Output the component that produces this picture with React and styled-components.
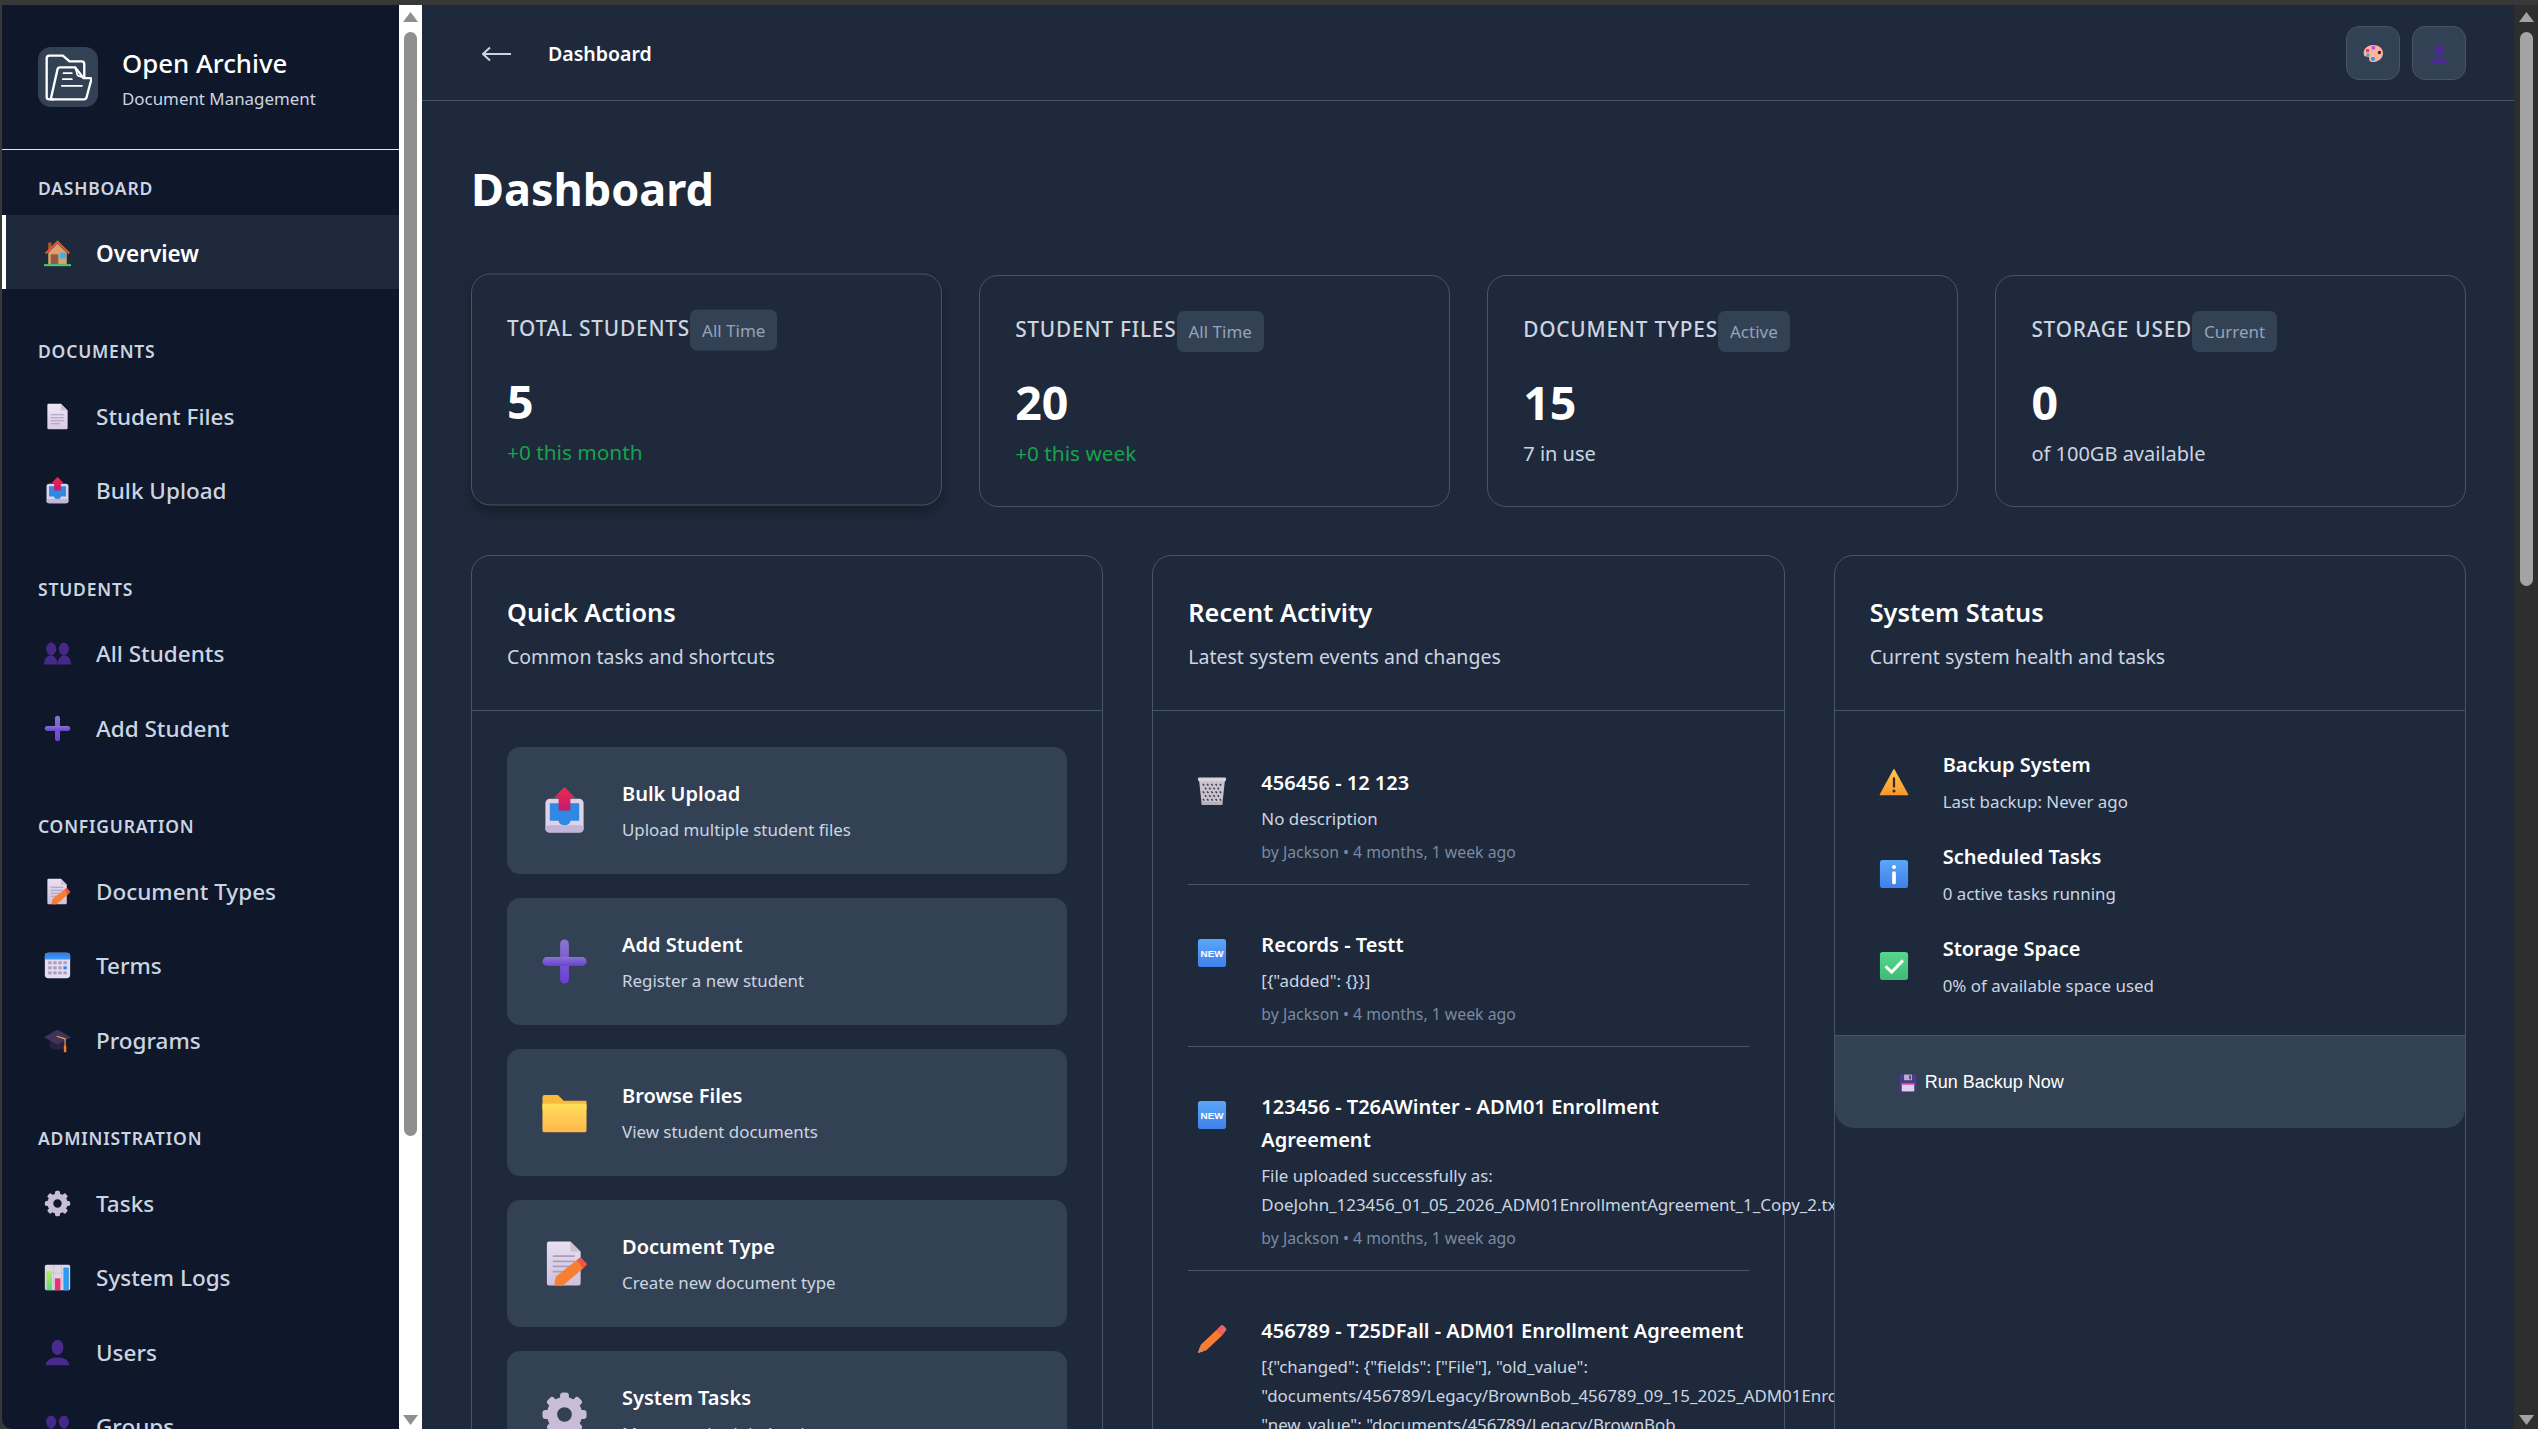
import React from "react";
import styled, { createGlobalStyle } from "styled-components";

const FONT = `"Noto Sans", "Open Sans", sans-serif`;

const Global = createGlobalStyle`
  html, body { margin: 0; padding: 0; background: #333; height: 100%; overflow: hidden; }
  body { font-family: ${FONT}; }
  * { box-sizing: border-box; }
`;

/* ---------- icons, drawn by hand in a 32 box ---------- */
const Svg = ({ size = 27, children }) => (
  <svg width={size} height={size} viewBox="0 0 32 32" style={{ display: "block", flex: "none" }}>{children}</svg>
);
const Grad = ({ id, a, b, x2 = 0, y2 = 1 }) => (
  <linearGradient id={id} x1="0" y1="0" x2={x2} y2={y2}><stop offset="0" stopColor={a} /><stop offset="1" stopColor={b} /></linearGradient>
);
const House = (p) => (
  <Svg {...p}>
    <rect x="5" y="3" width="4" height="10" fill="#b4552f" />
    <path d="M5 15 16 4l11 11v14H5z" fill="#dca06a" />
    <path d="M2 16 16 2l14 14" fill="none" stroke="#e5532d" strokeWidth="2.6" />
    <rect x="8" y="17" width="9" height="12" rx="1" fill="#8f5c4a" />
    <rect x="19" y="15" width="7" height="7" fill="#38b2f2" />
    <rect x="0" y="28.6" width="32" height="2.4" fill="#3fd072" />
  </Svg>
);
const Doc = (p) => (
  <Svg {...p}>
    <defs><Grad id="docg" a="#efe7f6" b="#d8cbe6" /></defs>
    <path d="M4 2.5A1.5 1.5 0 0 1 5.500 1H20l8 8v20.500a1.500 1.500 0 0 1-1.500 1.500h-21A1.500 1.500 0 0 1 4 29.500z" fill="url(#docg)" />
    <path d="M20 1v8h8z" fill="#cbc2d6" />
    <path d="M8 14h16M8 17.500h16M8 21h16M8 24.500h11" stroke="#a99fb8" strokeWidth="1.200" />
  </Svg>
);
const Upload = (p) => (
  <Svg {...p}>
    <defs><Grad id="upg" a="#ee2a4c" b="#c51a70" /></defs>
    <rect x="3" y="8" width="26" height="23" rx="3" fill="#ddd2e8" />
    <rect x="3" y="26" width="26" height="5" rx="2.500" fill="#c3b4da" />
    <path d="M6 11h20v12h-6a4 3 0 0 1-8 0H6z" fill="#2f88e2" />
    <path d="M16 0l7.500 7.500H20V16h-8V7.500H8.500z" fill="url(#upg)" />
  </Svg>
);
const bust = (x, w) => `M${x - w} 29c0-7 ${w - 4} -11 ${w} -11s${w} 4 ${w} 11z`;
const Users = (p) => (
  <Svg {...p}>
    <g fill="#46288a">
      <ellipse cx="8.500" cy="10.500" rx="6" ry="7.500" />
      <path d={bust(8, 8)} />
      <ellipse cx="23.500" cy="10.500" rx="6" ry="7.500" />
      <path d={bust(24, 8)} />
    </g>
  </Svg>
);
const Plus = (p) => (
  <Svg {...p}>
    <defs><Grad id="plg" a="#8a75cf" b="#6a3fd3" /></defs>
    <rect x="13" y="1" width="6" height="30" rx="3" fill="url(#plg)" />
    <rect x="1" y="13" width="30" height="6" rx="3" fill="url(#plg)" />
  </Svg>
);
const DocEdit = (p) => (
  <Svg {...p}>
    <defs><Grad id="degg" a="#e9e0f1" b="#cfc0de" /></defs>
    <path d="M4 2.500A1.500 1.500 0 0 1 5.500 1H20l7 7v21.500a1.500 1.500 0 0 1-1.500 1.500h-20A1.500 1.500 0 0 1 4 29.500z" fill="url(#degg)" />
    <path d="M20 1v7h7z" fill="#cbc2d6" />
    <path d="M8 11h15M8 14.500h15M8 18h12M8 21.500h8" stroke="#a99fb8" strokeWidth="1.200" />
    <path d="M9 31l1-6 14-11 5 5-14 12z" fill="#f67f33" />
    <path d="M24 14l3-2.500 4.500 5L29 19z" fill="#f1543f" />
  </Svg>
);
const Calendar = (p) => (
  <Svg {...p}>
    <defs><Grad id="calg" a="#2a7de8" b="#3f9bf5" /></defs>
    <rect x="1" y="1" width="30" height="30" rx="4" fill="#e4dcf0" />
    <path d="M1 9V5a4 4 0 0 1 4-4h22a4 4 0 0 1 4 4v4z" fill="url(#calg)" />
    <g fill="#a99dc2">
      {[7, 13, 19, 25].map((x) => [12, 18, 24].map((y) => (x === 25 && y === 18 ? null : <rect key={x + "-" + y} x={x - 2} y={y - 1} width="4" height="3.500" />)))}
    </g>
    <rect x="23" y="17" width="4" height="3.500" fill="#2f86e8" />
  </Svg>
);
const Cap = (p) => (
  <Svg {...p}>
    <path d="M7 16v8c4 4 14 4 18 0v-8z" fill="#2b2040" />
    <path d="M16 3l16 9-16 9L0 12z" fill="#40325a" />
    <path d="M15 11l10 3v9" fill="none" stroke="#eaa63e" strokeWidth="1.400" />
    <rect x="23.500" y="22" width="3" height="8" rx="1" fill="#ee7d2f" />
  </Svg>
);
const Gear = ({ color = "#c8bdd8", ...p }) => (
  <Svg {...p}>
    <g fill={color}>
      {[0, 45, 90, 135, 180, 225, 270, 315].map((a) => (
        <rect key={a} x="13" y="1" width="6" height="7" rx="2" transform={`rotate(${a} 16 16)`} />
      ))}
    </g>
    <circle cx="16" cy="16" r="8.500" fill="none" stroke={color} strokeWidth="7" />
  </Svg>
);
const Chart = (p) => (
  <Svg {...p}>
    <defs><Grad id="chg" a="#b8ee52" b="#5cd983" /></defs>
    <rect x="1" y="1" width="30" height="30" rx="2" fill="#ddd6e6" />
    <path d="M11.500 1v30M21 1v30M1 11h30M1 21h30" stroke="#c4bcd0" strokeWidth=".8" />
    <rect x="3" y="8" width="6.500" height="23" fill="url(#chg)" />
    <rect x="13" y="17" width="6.500" height="14" fill="#ee2f72" />
    <rect x="23" y="4" width="6.500" height="27" rx="1" fill="#2d9bf0" />
  </Svg>
);
const User = (p) => (
  <Svg {...p}>
    <g fill="#4a2a8e">
      <ellipse cx="16" cy="10" rx="7" ry="9" />
      <path d="M2 31c1-7 8-9 14-9s13 2 14 9z" />
    </g>
  </Svg>
);
const Folder = (p) => (
  <Svg {...p}>
    <defs><Grad id="fog" a="#ffdf5a" b="#ffb74a" /></defs>
    <path d="M1 5.500A1.500 1.500 0 0 1 2.500 4h9l4 4H31v6H1z" fill="#f8b93c" />
    <path d="M1 10h29a1 1 0 0 1 1 1v17a1.500 1.500 0 0 1-1.500 1.500h-27A1.500 1.500 0 0 1 1 28z" fill="url(#fog)" />
  </Svg>
);
const Trash = (p) => (
  <Svg {...p}>
    <path d="M2 3h28l-3 27a1 1 0 0 1-1 1H6a1 1 0 0 1-1-1z" fill="#c8c3cf" />
    <g fill="#3b3b4a">
      {[8, 12, 16, 20, 24].map((y, r) =>
        [7, 11.500, 16, 20.500, 25].map((x, i) => (r % 2 && i === 4 ? null : (
          <path key={x + "-" + y} d={`M${x + (r % 2 ? 2.200 : 0)} ${y}l1.300 1.900L${x + (r % 2 ? 2.200 : 0)} ${y + 2.600}l-1.300-1.900z`} />
        )))
      )}
    </g>
    <rect x="1" y="1.500" width="30" height="4" rx="1.500" fill="#d7d3dd" />
    <rect x="5" y="27.500" width="22" height="3.500" rx="1" fill="#b5b0bc" />
  </Svg>
);
const New = (p) => (
  <Svg {...p}>
    <defs><Grad id="neg" a="#5aa7f8" b="#3f80ea" /></defs>
    <rect x="1" y="1" width="30" height="30" rx="3" fill="url(#neg)" />
    <text x="16" y="20" textAnchor="middle" fontFamily="'Liberation Sans', sans-serif" fontWeight="700" fontSize="10.500" fill="#fff">NEW</text>
  </Svg>
);
const Pencil = (p) => (
  <Svg {...p}>
    <path d="M1 31l3-9L21 6l6 6-17 16z" fill="#f87c33" />
    <path d="M21 6l4-4a2.500 2.500 0 0 1 3.500 0l2 2a2.500 2.500 0 0 1 0 3.500L27 12z" fill="#f0616a" />
    <path d="M1 31l2-6 3.800 4z" fill="#c9907a" />
  </Svg>
);
const Warning = (p) => (
  <Svg {...p}>
    <defs><Grad id="wag" a="#ffc551" b="#f8982c" /></defs>
    <path d="M16 3l14.500 26.500h-29z" fill="url(#wag)" stroke="url(#wag)" strokeWidth="1.500" strokeLinejoin="round" />
    <rect x="14.800" y="11" width="2.400" height="11" rx="1.200" fill="#3a2a1c" />
    <circle cx="16" cy="25.500" r="1.600" fill="#3a2a1c" />
  </Svg>
);
const Info = (p) => (
  <Svg {...p}>
    <defs><Grad id="ing" a="#5aa7f8" b="#3f80ea" /></defs>
    <rect x="1" y="1" width="30" height="30" rx="3" fill="url(#ing)" />
    <circle cx="16" cy="8.500" r="2.200" fill="#fff" />
    <rect x="14" y="13" width="4" height="14" rx="2" fill="#fff" />
  </Svg>
);
const Check = (p) => (
  <Svg {...p}>
    <defs><Grad id="ckg" a="#57d78c" b="#3dbb76" /></defs>
    <rect x="1" y="1" width="30" height="30" rx="3" fill="url(#ckg)" />
    <path d="M7 16.500l6.500 6L25.500 10" fill="none" stroke="#fff" strokeWidth="3.200" />
  </Svg>
);
const Floppy = (p) => (
  <Svg {...p}>
    <rect x="1" y="1" width="30" height="30" rx="2" fill="#4d3a88" />
    <rect x="9" y="1" width="14" height="10" fill="#b9aecc" />
    <rect x="18" y="2.500" width="3" height="7" fill="#4d3a88" />
    <rect x="5" y="16" width="22" height="15" fill="#dccff0" />
    <rect x="5" y="16" width="22" height="3" fill="#e83f7a" />
  </Svg>
);
const Palette = (p) => (
  <Svg {...p}>
    <path d="M15 3C7 3 1 8.500 1 15.500c0 4 2 5 4.500 5 3 0 4.500 1 4 4-.5 3 1.500 4.500 5 4.500 9 0 16-6 16-13.500S24 3 15 3z" fill="#ffb4a0" />
    <circle cx="25" cy="14.500" r="2.600" fill="#2a2a38" />
    <rect x="13" y="4.500" width="5.500" height="5.500" rx="1.500" fill="#c650da" />
    <rect x="4.500" y="9" width="5" height="5" rx="1.500" fill="#f0367c" />
    <rect x="5" y="16" width="5" height="4.500" rx="1.500" fill="#27c0c8" />
    <rect x="12.500" y="21.500" width="5.500" height="5.500" rx="1.500" fill="#3a90f0" />
  </Svg>
);

const ArchiveLogo = () => (
  <svg width="47" height="47" viewBox="75 100 140 140" fill="none" stroke="#fff" strokeWidth="7" strokeLinejoin="round" strokeLinecap="round">
    <path d="M100 235H88a8 8 0 0 1-8-8V113a8 8 0 0 1 8-8h40l20 17h36a8 8 0 0 1 8 8v36" />
    <path d="M96 235a3 3 0 0 1-3-4l19-84a8 8 0 0 1 8-7h45l25 32h20a3 3 0 0 1 3 4l-14 52a8 8 0 0 1-8 7z" />
    <path d="M165 140l7 24 18 7M130 157h25M128 175h27M125 195h60" strokeWidth="5" />
  </svg>
);

/* ---------- frame ---------- */
const Frame = styled.div`
  display: flex;
  height: 100vh;
  padding: 5px 0 0 2px;
  overflow: hidden;
  background: #383838;
`;
const Sidebar = styled.aside`
  display: flex;
  flex: none;
  width: 420px;
  border-bottom-left-radius: 10px;
  overflow: hidden;
`;
const SidebarBody = styled.div`
  flex: 1;
  min-width: 0;
  background: #0f172a;
  overflow: hidden;
`;
const ScrollTrack = styled.div`
  display: flex;
  flex: none;
  flex-direction: column;
  align-items: center;
  width: ${(p) => p.$width}px;
  padding: 7px 0 4px;
  background: ${(p) => p.$bg};
`;
const ScrollArrow = styled.svg`
  display: block;
  flex: none;
  width: 15px;
  height: 10px;
  fill: ${(p) => p.$color};
`;
const ScrollThumb = styled.div`
  flex: none;
  width: 13px;
  height: ${(p) => p.$height}px;
  margin: 10px 0 auto;
  border-radius: 7px;
  background: ${(p) => p.$color};
`;
const ScrollBar = ({ width, bg, thumb, height }) => (
  <ScrollTrack $width={width} $bg={bg}>
    <ScrollArrow $color={thumb} viewBox="0 0 15 10"><path d="M7.500 0 15 10H0z" /></ScrollArrow>
    <ScrollThumb $color={thumb} $height={height} />
    <ScrollArrow $color={thumb} viewBox="0 0 15 10"><path d="M0 0h15L7.500 10z" /></ScrollArrow>
  </ScrollTrack>
);

const Brand = styled.div`
  display: flex;
  align-items: center;
  gap: 24px;
  height: 145px;
  padding-left: 36px;
  border-bottom: 1.500px solid #e2e8f0;
`;
const LogoBox = styled.div`
  display: flex;
  flex: none;
  align-items: center;
  justify-content: center;
  width: 60px;
  height: 60px;
  border-radius: 13px;
  background: #334155;
`;
const BrandText = styled.div`
  display: flex;
  flex-direction: column;
  gap: 6px;
  margin-top: 3px;
`;
const BrandTitle = styled.div`
  font-size: 25.800px;
  font-weight: 500;
  line-height: 34px;
  color: #fff;
`;
const BrandSub = styled.div`
  font-size: 16.900px;
  line-height: 26px;
  color: #cbd5e1;
`;
const Nav = styled.nav`
  display: flex;
  flex-direction: column;
  gap: 46.800px;
  padding-top: 23px;
`;
const NavGroup = styled.div`
  display: flex;
  flex-direction: column;
`;
const NavHeading = styled.div`
  margin-bottom: 12px;
  padding-left: 36px;
  font-size: 17.500px;
  font-weight: 600;
  line-height: 30px;
  letter-spacing: 0.8px;
  color: #cbd5e1;
`;
const NavItem = styled.div`
  display: flex;
  flex: none;
  align-items: center;
  gap: 25px;
  height: 74.400px;
  padding: 2px 0 0 38px;
  border-left: 4px solid ${(p) => (p.$active ? "#fff" : "transparent")};
  background: ${(p) => (p.$active ? "#1e293b" : "transparent")};
  font-size: 22.500px;
  font-weight: ${(p) => (p.$active ? 600 : 500)};
  color: ${(p) => (p.$active ? "#fff" : "#cbd5e1")};
`;

/* ---------- main ---------- */
const Main = styled.main`
  display: flex;
  flex: 1;
  min-width: 0;
  background: #1e293b;
`;
const MainColumn = styled.div`
  flex: 1;
  min-width: 0;
  overflow: hidden;
`;
const TopBar = styled.header`
  display: flex;
  align-items: center;
  height: 96px;
  padding: 0 48px 0 60px;
  border-bottom: 1.500px solid #475569;
`;
const BackArrow = styled.svg`
  display: block;
  width: 30px;
  height: 16px;
  margin-top: 2px;
  margin-right: 36px;
  stroke: #cbd5e1;
  fill: none;
`;
const TopTitle = styled.div`
  flex: 1;
  padding-top: 1px;
  font-size: 19.500px;
  font-weight: 600;
  color: #fff;
`;
const TopButtons = styled.div`
  display: flex;
  gap: 12px;
`;
const IconButton = styled.div`
  display: flex;
  align-items: center;
  justify-content: center;
  width: 54px;
  height: 54px;
  padding-top: 2px;
  border: 1px solid #475569;
  border-radius: 13px;
  background: #334155;
`;
const Content = styled.div`
  padding: 58px 48px 0 49px;
`;
const PageTitle = styled.h1`
  margin: 0 0 55.500px;
  font-size: 45px;
  font-weight: 700;
  line-height: 60px;
  color: #fff;
`;
const StatGrid = styled.div`
  display: grid;
  grid-template-columns: repeat(4, minmax(0, 1fr));
  gap: 37.500px;
  margin-bottom: 48px;
`;
const StatCard = styled.div`
  height: 232px;
  padding: 35px;
  border: 1px solid #475569;
  border-radius: 19px;
  background: #1e293b;
  transform: ${(p) => (p.$hover ? "translateY(-1.500px)" : "none")};
  box-shadow: ${(p) => (p.$hover ? "0 6px 12px rgba(0,0,0,.28)" : "none")};
`;
const StatHead = styled.div`
  display: flex;
  align-items: flex-start;
  margin-bottom: 21px;
`;
const StatLabel = styled.div`
  font-size: 20.800px;
  font-weight: 500;
  line-height: 36px;
  letter-spacing: 0.800px;
  white-space: nowrap;
  color: #cbd5e1;
`;
const StatBadge = styled.div`
  flex: none;
  height: 41px;
  padding: 0 12px;
  border-radius: 7px;
  background: #334155;
  font-size: 17px;
  line-height: 42px;
  color: #94a3b8;
`;
const StatValue = styled.div`
  margin-bottom: 6px;
  font-size: 46.500px;
  font-weight: 700;
  line-height: 58px;
  color: #fff;
`;
const StatNote = styled.div`
  font-size: ${(p) => (p.$good ? 20.800 : 20)}px;
  line-height: 33px;
  color: ${(p) => (p.$good ? "#16a34a" : "#cbd5e1")};
`;
const PanelGrid = styled.div`
  display: grid;
  grid-template-columns: repeat(3, minmax(0, 1fr));
  gap: 49px;
  align-items: stretch;
`;
const Panel = styled.section`
  position: relative;
  min-height: 900px;
  border: 1px solid #475569;
  border-radius: 19px;
  background: #1e293b;
`;
const PanelHead = styled.div`
  height: 155px;
  padding: 37px 35px 0;
  border-bottom: 1px solid #475569;
`;
const PanelTitle = styled.h2`
  margin: 0 0 11px;
  font-size: 25.300px;
  font-weight: 600;
  line-height: 38px;
  color: #fff;
`;
const PanelSub = styled.div`
  font-size: 19.500px;
  line-height: 30px;
  color: #cbd5e1;
`;
const PanelBody = styled.div`
  display: flex;
  flex-direction: column;
  gap: ${(p) => p.$gap}px;
  padding: ${(p) => p.$top || 36}px 35px 36px;
`;
const ActionCard = styled.div`
  display: flex;
  flex: none;
  align-items: center;
  gap: 34px;
  height: 127px;
  padding-left: 34px;
  border-radius: 13px;
  background: #334155;
`;
const ItemTitle = styled.div`
  font-size: 20px;
  font-weight: 600;
  line-height: 33px;
  color: #fff;
`;
const ItemDesc = styled.div`
  margin-top: ${(p) => p.$gap || 5}px;
  font-size: 16.900px;
  line-height: 29px;
  color: #cbd5e1;
`;
const ItemMeta = styled.div`
  margin-top: 6px;
  font-size: 15.800px;
  line-height: 26px;
  color: #7b8aa0;
`;
const ActivityList = styled.div`
  display: flex;
  flex-direction: column;
`;
const ActivityRow = styled.div`
  display: flex;
  gap: 34px;
  padding: 19px 0;
  margin-bottom: 24px;
  border-bottom: 1px solid #475569;
`;
const ActivityIcon = styled.div`
  flex: none;
  padding: 10px 0 0 9px;
  width: 39px;
`;
const ActivityText = styled.div`
  flex: 1;
  min-width: 0;
`;
const StatusRow = styled.div`
  display: flex;
  align-items: center;
  gap: 34px;
  padding-left: 9px;
`;
const PanelFoot = styled.div`
  display: flex;
  align-items: center;
  height: 93px;
  padding-left: 64px;
  margin-top: -1px;
  border-top: 1px solid #475569;
  border-radius: 0 0 19px 19px;
  background: #334155;
`;
const RunButton = styled.div`
  display: flex;
  align-items: center;
  gap: 8px;
  padding-top: 2px;
  font-family: "Liberation Sans", Arial, sans-serif;
  font-size: 18px;
  color: #fff;
`;

const nav = [
  ["Dashboard", [[House, "Overview", true]]],
  ["Documents", [[Doc, "Student Files"], [Upload, "Bulk Upload"]]],
  ["Students", [[Users, "All Students"], [Plus, "Add Student"]]],
  ["Configuration", [[DocEdit, "Document Types"], [Calendar, "Terms"], [Cap, "Programs"]]],
  ["Administration", [[Gear, "Tasks"], [Chart, "System Logs"], [User, "Users"], [Users, "Groups"]]],
];
const stats = [
  ["Total Students", "All Time", "5", "+0 this month", true, true],
  ["Student Files", "All Time", "20", "+0 this week", true],
  ["Document Types", "Active", "15", "7 in use"],
  ["Storage Used", "Current", "0", "of 100GB available"],
];
const actions = [
  [Upload, "Bulk Upload", "Upload multiple student files"],
  [Plus, "Add Student", "Register a new student"],
  [Folder, "Browse Files", "View student documents"],
  [DocEdit, "Document Type", "Create new document type"],
  [Gear, "System Tasks", "Manage scheduled tasks"],
];
const activity = [
  [Trash, "456456 - 12 123", ["No description"]],
  [New, "Records - Testt", ['[{"added": {}}]']],
  [New, "123456 - T26AWinter - ADM01 Enrollment Agreement", ["File uploaded successfully as: DoeJohn_123456_01_05_2026_ADM01EnrollmentAgreement_1_Copy_2.txt"]],
  [Pencil, "456789 - T25DFall - ADM01 Enrollment Agreement", ['[{"changed": {"fields": ["File"], "old_value": "documents/456789/Legacy/BrownBob_456789_09_15_2025_ADM01EnrollmentAgreement.txt", "new_value": "documents/456789/Legacy/BrownBob']],
];
const status = [
  [Warning, "Backup System", "Last backup: Never ago"],
  [Info, "Scheduled Tasks", "0 active tasks running"],
  [Check, "Storage Space", "0% of available space used"],
];

export default function App() {
  return (
    <>
      <Global />
      <Frame>
        <Sidebar>
          <SidebarBody>
            <Brand>
              <LogoBox><ArchiveLogo /></LogoBox>
              <BrandText>
                <BrandTitle>Open Archive</BrandTitle>
                <BrandSub>Document Management</BrandSub>
              </BrandText>
            </Brand>
            <Nav>
              {nav.map(([heading, items]) => (
                <NavGroup key={heading}>
                  <NavHeading>{heading.toUpperCase()}</NavHeading>
                  {items.map(([Icon, label, active]) => (
                    <NavItem key={label} $active={active}>
                      <Icon size={27} />
                      {label}
                    </NavItem>
                  ))}
                </NavGroup>
              ))}
            </Nav>
          </SidebarBody>
          <ScrollBar width={23} bg="#fff" thumb="#8f8f8f" height={1104} />
        </Sidebar>
        <Main>
          <MainColumn>
            <TopBar>
              <BackArrow viewBox="0 0 30 16" strokeWidth="2">
                <path d="M1 8h28M8 1.500 1 8l7 6.500" />
              </BackArrow>
              <TopTitle>Dashboard</TopTitle>
              <TopButtons>
                <IconButton><Palette size={21} /></IconButton>
                <IconButton><User size={20} /></IconButton>
              </TopButtons>
            </TopBar>
            <Content>
              <PageTitle>Dashboard</PageTitle>
              <StatGrid>
                {stats.map(([label, badge, value, note, good, hover]) => (
                  <StatCard key={label} $hover={hover}>
                    <StatHead>
                      <StatLabel>{label.toUpperCase()}</StatLabel>
                      <StatBadge>{badge}</StatBadge>
                    </StatHead>
                    <StatValue>{value}</StatValue>
                    <StatNote $good={good}>{note}</StatNote>
                  </StatCard>
                ))}
              </StatGrid>
              <PanelGrid>
                <Panel>
                  <PanelHead>
                    <PanelTitle>Quick Actions</PanelTitle>
                    <PanelSub>Common tasks and shortcuts</PanelSub>
                  </PanelHead>
                  <PanelBody $gap={24}>
                    {actions.map(([Icon, title, desc]) => (
                      <ActionCard key={title}>
                        <Icon size={47} />
                        <div>
                          <ItemTitle>{title}</ItemTitle>
                          <ItemDesc>{desc}</ItemDesc>
                        </div>
                      </ActionCard>
                    ))}
                  </PanelBody>
                </Panel>
                <Panel>
                  <PanelHead>
                    <PanelTitle>Recent Activity</PanelTitle>
                    <PanelSub>Latest system events and changes</PanelSub>
                  </PanelHead>
                  <PanelBody $gap={0}>
                    <ActivityList>
                      {activity.map(([Icon, title, lines], i) => (
                        <ActivityRow key={i}>
                          <ActivityIcon><Icon size={30} /></ActivityIcon>
                          <ActivityText>
                            <ItemTitle>{title}</ItemTitle>
                            {lines.map((l) => <ItemDesc key={l}>{l}</ItemDesc>)}
                            <ItemMeta>by Jackson • 4 months, 1 week ago</ItemMeta>
                          </ActivityText>
                        </ActivityRow>
                      ))}
                    </ActivityList>
                  </PanelBody>
                </Panel>
                <Panel>
                  <PanelHead>
                    <PanelTitle>System Status</PanelTitle>
                    <PanelSub>Current system health and tasks</PanelSub>
                  </PanelHead>
                  <PanelBody $gap={24} $top={37}>
                    {status.map(([Icon, title, desc]) => (
                      <StatusRow key={title}>
                        <Icon size={30} />
                        <div>
                          <ItemTitle>{title}</ItemTitle>
                          <ItemDesc $gap={6}>{desc}</ItemDesc>
                        </div>
                      </StatusRow>
                    ))}
                  </PanelBody>
                  <PanelFoot>
                    <RunButton><Floppy size={18} />Run Backup Now</RunButton>
                  </PanelFoot>
                </Panel>
              </PanelGrid>
            </Content>
          </MainColumn>
          <ScrollBar width={24} bg="#2e2e2e" thumb="#a3a3a3" height={554} />
        </Main>
      </Frame>
    </>
  );
}
